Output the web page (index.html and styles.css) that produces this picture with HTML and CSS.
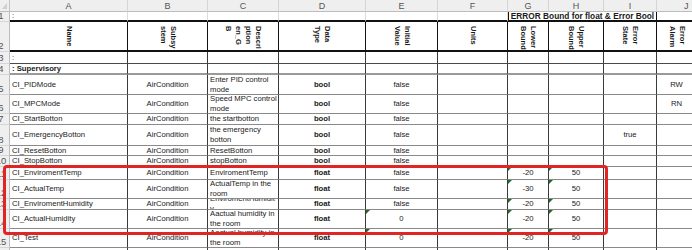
FILE: index.html
```html
<!DOCTYPE html>
<html>
<head>
<meta charset="utf-8">
<link rel="stylesheet" href="styles.css">
</head>
<body>
<div class="sheet">
  <div class="row hdr">
    <div class="corner"></div>
    <div class="ch">A</div><div class="ch">B</div><div class="ch">C</div><div class="ch">D</div><div class="ch">E</div>
    <div class="ch">F</div><div class="ch">G</div><div class="ch">H</div><div class="ch">I</div><div class="ch chj">J</div>
  </div>
  <div class="row r1">
    <div class="rh"><span>1</span></div>
    <div class="c l">:</div><div class="c"></div><div class="c"></div><div class="c"></div><div class="c"></div><div class="c"></div>
    <div class="c merge">ERROR Bound for float &amp; Error Bool</div>
    <div class="c"></div>
  </div>
  <div class="row r2">
    <div class="rh"><span>2</span></div>
    <div class="c"><span class="v">Name</span></div>
    <div class="c"><span class="v">Subsy<br>stem</span></div>
    <div class="c"><span class="v">Descri<br>ption<br>en_G<br>B</span></div>
    <div class="c"><span class="v">Data<br>Type</span></div>
    <div class="c"><span class="v">Initial<br>Value</span></div>
    <div class="c"><span class="v">Units</span></div>
    <div class="c"><span class="v">Lower<br>Bound</span></div>
    <div class="c"><span class="v">Upper<br>Bound</span></div>
    <div class="c"><span class="v">Error<br>State</span></div>
    <div class="c"><span class="v">Error<br>Alarm</span></div>
  </div>
  <div class="row r3">
    <div class="rh"><span>3</span></div>
    <div class="c l">:</div><div class="c"></div><div class="c"></div><div class="c"></div><div class="c"></div><div class="c"></div><div class="c"></div><div class="c"></div><div class="c"></div><div class="c"></div>
  </div>
  <div class="row r4">
    <div class="rh"><span>4</span></div>
    <div class="c l b">: Supervisory</div><div class="c"></div><div class="c"></div><div class="c"></div><div class="c"></div><div class="c"></div><div class="c"></div><div class="c"></div><div class="c"></div><div class="c"></div>
  </div>
  <div class="row">
    <div class="rh"><span>5</span></div>
    <div class="c l">CI_PIDMode</div><div class="c">AirCondition</div><div class="c l"><span>Enter PID control<br>mode</span></div>
    <div class="c b">bool</div><div class="c">false</div><div class="c"></div><div class="c"></div><div class="c"></div><div class="c"></div><div class="c">RW</div>
  </div>
  <div class="row">
    <div class="rh"><span>6</span></div>
    <div class="c l">CI_MPCMode</div><div class="c">AirCondition</div><div class="c l"><span>Speed MPC control<br>mode</span></div>
    <div class="c b">bool</div><div class="c">false</div><div class="c"></div><div class="c"></div><div class="c"></div><div class="c"></div><div class="c">RN</div>
  </div>
  <div class="row">
    <div class="rh"><span>7</span></div>
    <div class="c l">CI_StartBotton</div><div class="c">AirCondition</div><div class="c l"><span>the startbotton</span></div>
    <div class="c b">bool</div><div class="c">false</div><div class="c"></div><div class="c"></div><div class="c"></div><div class="c"></div><div class="c"></div>
  </div>
  <div class="row">
    <div class="rh"><span>8</span></div>
    <div class="c l">CI_EmergencyBotton</div><div class="c">AirCondition</div><div class="c l"><span>the emergency<br>botton</span></div>
    <div class="c b">bool</div><div class="c">false</div><div class="c"></div><div class="c"></div><div class="c"></div><div class="c">true</div><div class="c"></div>
  </div>
  <div class="row">
    <div class="rh"><span>9</span></div>
    <div class="c l">CI_ResetBotton</div><div class="c">AirCondition</div><div class="c l"><span>ResetBotton</span></div>
    <div class="c b">bool</div><div class="c">false</div><div class="c"></div><div class="c"></div><div class="c"></div><div class="c"></div><div class="c"></div>
  </div>
  <div class="row">
    <div class="rh"><span>10</span></div>
    <div class="c l">CI_StopBotton</div><div class="c">AirCondition</div><div class="c l"><span>stopBotton</span></div>
    <div class="c b">bool</div><div class="c">false</div><div class="c"></div><div class="c"></div><div class="c"></div><div class="c"></div><div class="c"></div>
  </div>
  <div class="row">
    <div class="rh"><span>11</span></div>
    <div class="c l">CI_EnviromentTemp</div><div class="c">AirCondition</div><div class="c l"><span>EnviromentTemp</span></div>
    <div class="c b">float</div><div class="c">false</div><div class="c"></div><div class="c t">-20</div><div class="c t">50</div><div class="c"></div><div class="c"></div>
  </div>
  <div class="row">
    <div class="rh"><span>12</span></div>
    <div class="c l">CI_ActualTemp</div><div class="c">AirCondition</div><div class="c l"><span>ActualTemp in the<br>room</span></div>
    <div class="c b">float</div><div class="c">false</div><div class="c"></div><div class="c t">-30</div><div class="c t">50</div><div class="c"></div><div class="c"></div>
  </div>
  <div class="row">
    <div class="rh"><span>13</span></div>
    <div class="c l">CI_EnviromentHumidity</div><div class="c">AirCondition</div><div class="c l"><span>EnviromentHumidit<br>y</span></div>
    <div class="c b">float</div><div class="c">false</div><div class="c"></div><div class="c t">-20</div><div class="c t">50</div><div class="c"></div><div class="c"></div>
  </div>
  <div class="row">
    <div class="rh"><span>14</span></div>
    <div class="c l">CI_ActualHumidity</div><div class="c">AirCondition</div><div class="c l"><span>Aactual humidity in<br>the room</span></div>
    <div class="c b">float</div><div class="c t">0</div><div class="c"></div><div class="c t">-20</div><div class="c t">50</div><div class="c"></div><div class="c"></div>
  </div>
  <div class="row">
    <div class="rh"><span>15</span></div>
    <div class="c l">CI_Test</div><div class="c">AirCondition</div><div class="c l"><span>Aactual humidity in<br>the room</span></div>
    <div class="c b">float</div><div class="c t">0</div><div class="c"></div><div class="c t">-20</div><div class="c t">50</div><div class="c"></div><div class="c"></div>
  </div>
  <div class="row">
    <div class="rh"><span>16</span></div>
    <div class="c"></div><div class="c"></div><div class="c"></div><div class="c"></div><div class="c"></div><div class="c"></div><div class="c"></div><div class="c"></div><div class="c"></div><div class="c"></div>
  </div>
  <div class="mark"></div>
</div>
</body>
</html>
```

FILE: styles.css
```css
* { box-sizing: border-box; }
html, body { margin: 0; padding: 0; background: #fff; }
body {
  width: 692px;
  height: 250px;
  overflow: hidden;
  font-family: "Liberation Sans", Arial, sans-serif;
}
.sheet {
  position: relative;
  display: grid;
  grid-template-columns: 10px 118px 80px 71px 87px 72px 70px 41px 55px 53px 40px;
  grid-template-rows: 12px 10px 30px 12px 11px 20px 19px 11px 21px 10px 11px 13px 19px 11px 19px 19px 12px;
  font-size: 7.7px;
  color: #1a1a1a;
}
.row { display: contents; }

.corner {
  position: relative;
  background: #efefef;
  border-right: 1px solid #c4c4c4;
  border-bottom: 1px solid #bdbdbd;
}
.corner::after {
  content: "";
  position: absolute;
  right: 2px;
  bottom: 2px;
  border-bottom: 6px solid #cfcfcf;
  border-left: 5px solid transparent;
}
.ch {
  background: #efefef;
  border-right: 1px solid #d5d5d5;
  border-bottom: 1px solid #bdbdbd;
  color: #555;
  font-size: 9px;
  display: flex;
  align-items: center;
  justify-content: center;
}
.chj {
  justify-content: flex-start;
  padding-left: 27px;
}
.rh {
  background: #efefef;
  border-right: 1px solid #bdbdbd;
  border-bottom: 1px solid #d5d5d5;
  color: #555;
  font-size: 9.5px;
  line-height: 10px;
  display: flex;
  align-items: flex-end;
  overflow: hidden;
  white-space: nowrap;
}
.rh span {
  flex: none;
  width: 22px;
  margin-left: -10px;
  text-align: center;
}

.c {
  position: relative;
  border-right: 1px solid #3a3a3a;
  border-bottom: 1px solid #8a8a8a;
  display: flex;
  align-items: center;
  justify-content: center;
  overflow: hidden;
  white-space: nowrap;
  line-height: 10px;
  padding: 0 2px;
}
.l { justify-content: flex-start; }
.b { font-weight: bold; }

.r1 .c {
  border-right: 1px solid #dcdcdc;
  border-bottom: 2px solid #111;
}
.r1 .merge {
  grid-column: span 3;
  border-left: 1px solid #111;
  border-right: 1px solid #111;
  font-weight: bold;
  font-size: 8.3px;
}
.r2 .c {
  border-right: 1px solid #111;
  border-bottom: 2px solid #111;
  align-items: flex-start;
  padding-top: 4px;
}
.v {
  writing-mode: vertical-rl;
  font-weight: bold;
  font-size: 7.5px;
  line-height: 10px;
  white-space: nowrap;
}
.r3 .c { border-bottom: 1px solid #4a4a4a; }
.r4 .c { border-bottom: 2px solid #9a9a9a; }

.t::before {
  content: "";
  position: absolute;
  left: 0;
  top: 0;
  border-top: 4px solid #1f6b2c;
  border-right: 4px solid transparent;
}

.mark {
  position: absolute;
  left: 3px;
  top: 165px;
  width: 605px;
  height: 70px;
  border: 3px solid #e32424;
  border-radius: 4px;
  pointer-events: none;
}
```
